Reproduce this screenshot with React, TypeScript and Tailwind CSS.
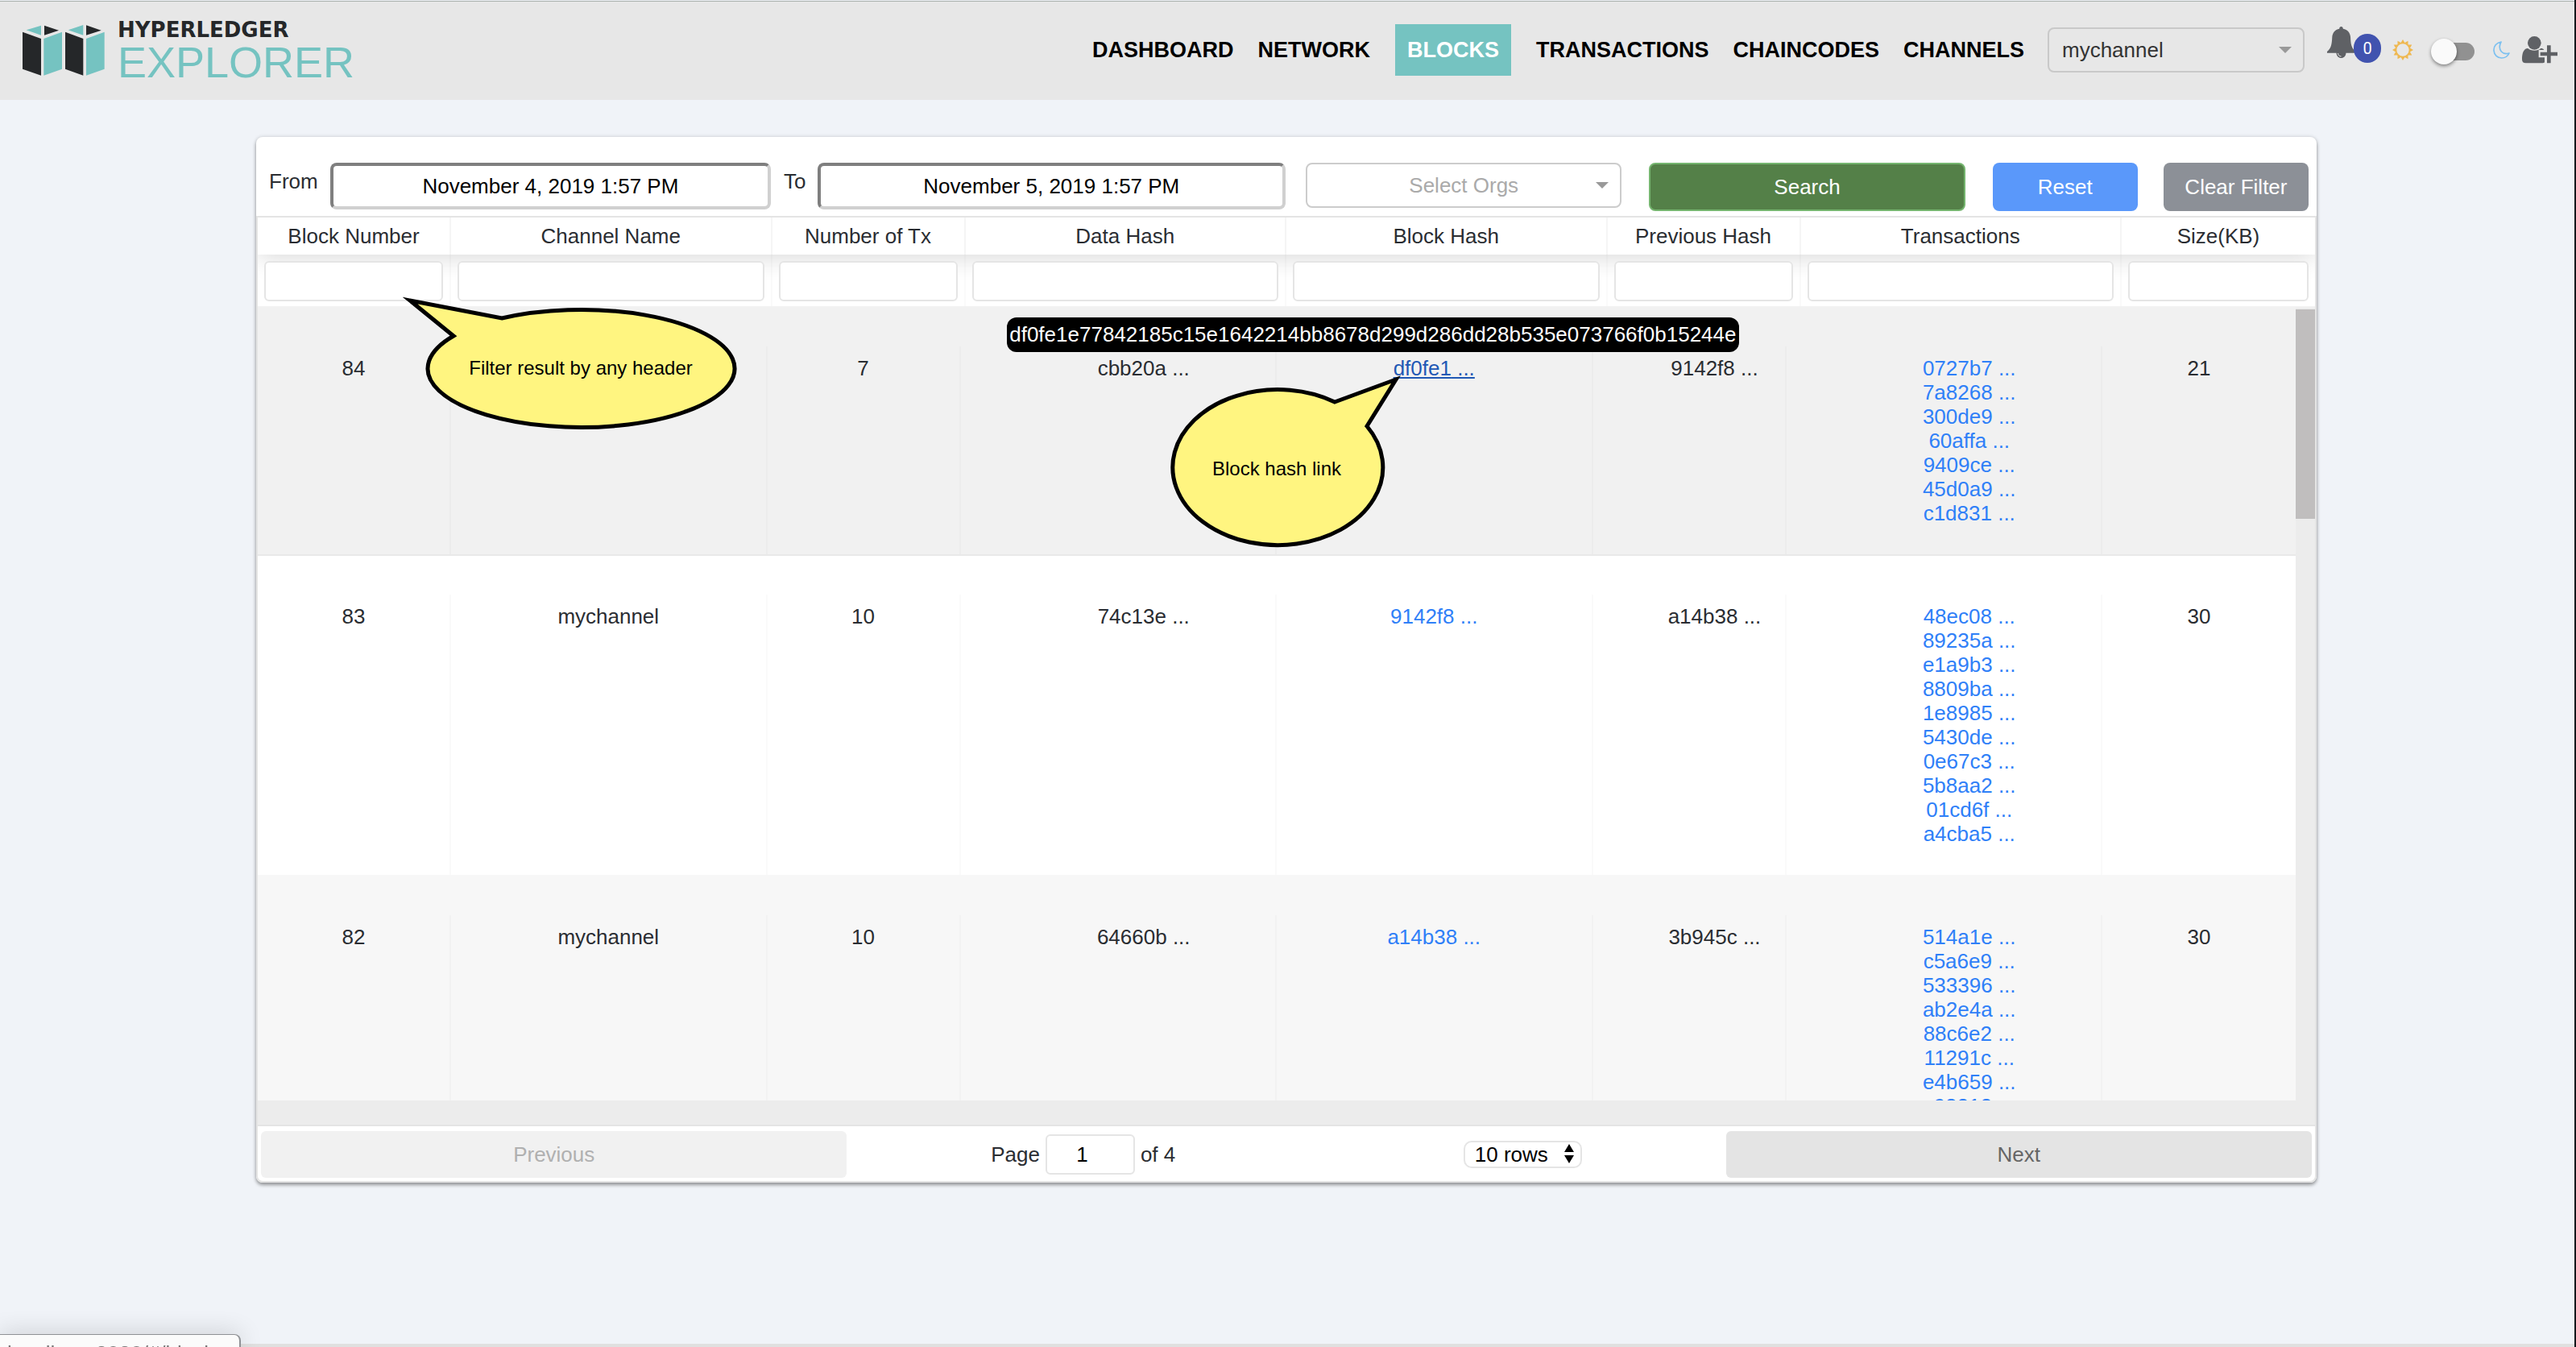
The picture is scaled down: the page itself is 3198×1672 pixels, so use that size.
import React from "react";

const navItems = ["DASHBOARD", "NETWORK", "BLOCKS", "TRANSACTIONS", "CHAINCODES", "CHANNELS"];

const columns = [
  "Block Number",
  "Channel Name",
  "Number of Tx",
  "Data Hash",
  "Block Hash",
  "Previous Hash",
  "Transactions",
  "Size(KB)",
];

const rowGrid = "grid grid-cols-[240px_1fr_240px_1fr_1fr_240px_1fr_240px]";

type Block = {
  id: number;
  channel: string;
  txCount: number;
  dataHash: string;
  blockHash: string;
  prevHash: string;
  txs: string[];
  size: number;
  bg: string;
};

const blocks: Block[] = [
  {
    id: 84,
    channel: "",
    txCount: 7,
    dataHash: "cbb20a",
    blockHash: "df0fe1",
    prevHash: "9142f8",
    txs: ["0727b7", "7a8268", "300de9", "60affa", "9409ce", "45d0a9", "c1d831"],
    size: 21,
    bg: "bg-[#f1f1f1]",
  },
  {
    id: 83,
    channel: "mychannel",
    txCount: 10,
    dataHash: "74c13e",
    blockHash: "9142f8",
    prevHash: "a14b38",
    txs: ["48ec08", "89235a", "e1a9b3", "8809ba", "1e8985", "5430de", "0e67c3", "5b8aa2", "01cd6f", "a4cba5"],
    size: 30,
    bg: "bg-white",
  },
  {
    id: 82,
    channel: "mychannel",
    txCount: 10,
    dataHash: "64660b",
    blockHash: "a14b38",
    prevHash: "3b945c",
    txs: ["514a1e", "c5a6e9", "533396", "ab2e4a", "88c6e2", "11291c", "e4b659", "c98212"],
    size: 30,
    bg: "bg-[#f7f7f7]",
  },
];

function Logo() {
  return (
    <a href="#/" className="-my-4 flex items-center">
      <svg className="h-[63px] w-[102px]" viewBox="84 97 306 189" aria-hidden="true">
        <g fill="#252729">
          <path d="M84 123L153 148V285L84 261Z" />
          <path d="M165 99L219 117L165 135Z" />
          <path d="M243 123L310 148V285L243 261Z" />
          <path d="M321 98L377 117L321 135Z" />
        </g>
        <g fill="#75c3c1">
          <path d="M163 148L231 123V261L163 285Z" />
          <path d="M98 116L153 99V135Z" />
          <path d="M321 148L389 123V261L321 285Z" />
          <path d="M254 116L310 97V135Z" />
        </g>
      </svg>
      <span className="ml-4 flex flex-col pt-1">
        <span className="font-['DejaVu_Sans'] text-[26px] font-bold leading-[26px] text-[#252729]">HYPERLEDGER</span>
        <span className="text-[54px] leading-[54px] text-[#75c3c1]">EXPLORER</span>
      </span>
    </a>
  );
}

function Caret() {
  return (
    <svg className="pointer-events-none absolute right-4 top-6 h-2 w-4" viewBox="0 0 16 8" aria-hidden="true">
      <path d="M0 0H16L8 8Z" fill="#999" />
    </svg>
  );
}

function BellIcon() {
  return (
    <svg className="h-[39px] w-[35px]" viewBox="0 0 106 118" aria-hidden="true">
      <path
        fill="#5f6165"
        d="M53 0C57 0 60 3 60 8C77 11 87 23 88 40C89 66 91 80 106 92V99H71C71 110 63 118 53 118C43 118 35 110 35 99H0V94C15 82 18 66 19 40C20 23 30 11 46 8C46 3 49 0 53 0Z"
      />
      <path d="M41 100C41 107 46 112 53 112" fill="none" stroke="#e7e7e7" strokeWidth="3" />
    </svg>
  );
}

function SunIcon() {
  const rays = Array.from({ length: 12 }, (_, i) => i * 30);
  return (
    <svg className="h-[26px] w-[26px]" viewBox="-38 -38 76 76" aria-hidden="true">
      <circle r="25" fill="none" stroke="#efb850" strokeWidth="5" />
      {rays.map((angle) => (
        <path key={angle} d="M-7 -26L0 -38L7 -26Z" fill="#efb850" transform={`rotate(${angle})`} />
      ))}
    </svg>
  );
}

function MoonIcon() {
  return (
    <svg className="h-[22px] w-[21px]" viewBox="0 0 63 66" aria-hidden="true">
      <path
        d="M30 3C12 6 2 20 3 35C4 51 16 63 32 63C45 63 55 56 60 45C49 48 38 47 31 39C23 29 24 14 30 3Z"
        fill="none"
        stroke="#7cc0f0"
        strokeWidth="5"
        strokeLinejoin="round"
      />
    </svg>
  );
}

function UserPlusIcon() {
  return (
    <svg className="h-[34px] w-[44px]" viewBox="0 0 132 102" aria-hidden="true">
      <g fill="#5f6165">
        <circle cx="46" cy="25" r="25" />
        <path d="M22 45C33 56 59 56 70 45C76 45 79 47 82 51H62V79H84V97C82 99 79 100 74 100H14C5 100 0 95 0 86C0 64 6 45 22 45Z" />
        <path d="M93 34H107V59H132V73H107V100H93V73H68V59H93Z" />
      </g>
    </svg>
  );
}

function ThemeSwitch() {
  return (
    <label className="relative flex h-8 w-[54px] items-center">
      <input type="checkbox" role="switch" aria-label="Dark theme" className="absolute inset-0 opacity-0" />
      <span className="ml-3 h-[22px] w-full rounded-full bg-[#919191]" />
      <span className="absolute left-0 top-0 h-8 w-8 rounded-full bg-[#fafafa] shadow-[0_2px_4px_rgba(0,0,0,0.45)]" />
    </label>
  );
}

function Header() {
  return (
    <header className="flex items-center justify-between border-t border-[#a9b0ad] bg-[#e7e7e7] pb-[30px] pl-7 pr-[21px] pt-7">
      <Logo />
      <div className="flex items-center">
        <nav className="flex text-[27px] font-bold text-black">
          {navItems.map((item) => (
            <a
              key={item}
              href={"#/" + item.toLowerCase()}
              className={
                item === "BLOCKS"
                  ? "mx-4 bg-[#75c3c1] px-[15px] leading-[64px] text-white"
                  : "px-[15px] leading-[64px]"
              }
            >
              {item}
            </a>
          ))}
        </nav>
        <div className="relative ml-3.5 w-[319px]">
          <select
            aria-label="Channel"
            className="h-14 w-full appearance-none rounded-lg border-2 border-[#c9c9c9] bg-transparent px-4 text-[26px] text-[#333]"
          >
            <option>mychannel</option>
          </select>
          <Caret />
        </div>
        <button type="button" aria-label="Notifications" className="relative ml-7 mr-3.5 flex h-[58px] w-[67px] items-start">
          <BellIcon />
          <span className="absolute right-0 top-[9px] flex h-9 w-[34px] items-center justify-center rounded-full bg-[#4153af] font-['Roboto'] text-[20px] text-white">
            0
          </span>
        </button>
        <div className="flex items-center">
          <SunIcon />
          <span className="ml-[22px] mr-[23px] mt-1">
            <ThemeSwitch />
          </span>
          <MoonIcon />
          <button type="button" aria-label="Add user" className="ml-[15px]">
            <UserPlusIcon />
          </button>
        </div>
      </div>
    </header>
  );
}

const dateInput =
  "h-[58px] w-0 rounded-lg border-4 border-b-[#d0d0d0] border-l-[#7f7f7f] border-r-[#d0d0d0] border-t-[#7f7f7f] bg-white text-center text-[26px] text-black";

function Toolbar() {
  return (
    <form className="flex items-start pb-1.5 pl-4 pr-2.5 pt-8" onSubmit={(e) => e.preventDefault()}>
      <label htmlFor="from" className="mr-[15px] mt-2">
        From
      </label>
      <input id="from" className={dateInput + " flex-[539]"} defaultValue="November 4, 2019 1:57 PM" />
      <label htmlFor="to" className="ml-4 mr-3.5 mt-2">
        To
      </label>
      <input id="to" className={dateInput + " flex-[573]"} defaultValue="November 5, 2019 1:57 PM" />
      <div className="relative ml-[25px] mr-[34px] flex-[392]">
        <select
          aria-label="Organizations"
          className="h-14 w-full appearance-none rounded-lg border-2 border-[#ccc] bg-white text-[#aaa] [text-align-last:center]"
        >
          <option>Select Orgs</option>
        </select>
        <Caret />
      </div>
      <button
        type="submit"
        className="h-[60px] flex-[388] rounded-lg border-2 border-[#75b56f] bg-[#548048] text-white"
      >
        Search
      </button>
      <button type="button" className="ml-[34px] h-[60px] flex-[180] rounded-lg bg-[#5a98fa] text-white">
        Reset
      </button>
      <button type="button" className="ml-8 h-[60px] flex-[180] whitespace-nowrap rounded-lg bg-[#8c9097] text-white">
        Clear Filter
      </button>
    </form>
  );
}

function FilterCallout() {
  return (
    <svg
      className="pointer-events-none absolute left-[180px] top-[51px] z-10 h-[168px] w-[420px]"
      viewBox="0 0 420 168"
    >
      <path
        d="M63 50L9 6L123 28A190.5 73 0 1 1 63 50Z"
        fill="#fff580"
        stroke="#000"
        strokeWidth="5"
        strokeMiterlimit="10"
      />
      <text x="221" y="98" textAnchor="middle" fontSize="24" fill="#000">
        Filter result by any header
      </text>
    </svg>
  );
}

function HashCallout() {
  return (
    <svg
      className="pointer-events-none absolute -left-[133px] top-8 z-10 h-[222px] w-[292px]"
      viewBox="0 0 292 222"
    >
      <path
        d="M205 37L281 9L245 67A130.5 96.5 0 1 1 205 37Z"
        fill="#fff580"
        stroke="#000"
        strokeWidth="5"
        strokeMiterlimit="10"
      />
      <text x="133" y="128" textAnchor="middle" fontSize="24" fill="#000">
        Block hash link
      </text>
    </svg>
  );
}

const cell = "border-r-2 border-black/[0.02] pb-9 pt-3 text-center";

function BlockRow({ block }: { block: Block }) {
  const hovered = block.id === 84;
  return (
    <tr className={rowGrid + " border-b-2 border-black/[0.03] pt-12 " + block.bg}>
      <td className={cell}>{block.id}</td>
      <td className={cell}>{block.channel}</td>
      <td className={cell}>{block.txCount}</td>
      <td className={cell + " pl-16"}>{block.dataHash} ...</td>
      <td className={cell + " relative"}>
        <a
          href={"#/block/" + block.blockHash}
          className={hovered ? "text-[#1f58b5] underline decoration-2 underline-offset-2" : "text-[#2f80f8]"}
        >
          {block.blockHash} ...
        </a>
        {hovered && (
          <>
            <span
              role="tooltip"
              className="absolute -right-[183px] -top-9 z-10 rounded-[12px] bg-black px-[3px] pb-[7px] pt-1.5 text-white"
            >
              df0fe1e77842185c15e1642214bb8678d299d286dd28b535e073766f0b15244e
            </span>
            <HashCallout />
          </>
        )}
      </td>
      <td className={cell + " pl-16"}>{block.prevHash} ...</td>
      <td className={cell + " pl-16"}>
        <ul>
          {block.txs.map((tx) => (
            <li key={tx}>
              <a href={"#/transaction/" + tx} className="text-[#2f80f8]">
                {tx} ...
              </a>
            </li>
          ))}
        </ul>
      </td>
      <td className="pt-3 text-center">{block.size}</td>
    </tr>
  );
}

function BlocksTable() {
  return (
    <div className="relative overflow-hidden">
      <table className="block">
        <thead className="block">
          <tr className={rowGrid + " bg-white shadow-[0_4px_30px_rgba(0,0,0,0.15)]"}>
            {columns.map((c) => (
              <th key={c} scope="col" className="border-r-2 border-black/[0.04] py-2 font-normal last:border-r-0">
                {c}
              </th>
            ))}
          </tr>
          <tr className={rowGrid + " border-b-2 border-black/5"}>
            {columns.map((c, i) => (
              <td key={c} className="relative border-r-2 border-black/[0.02] px-2 pb-1.5 pt-2 last:border-r-0">
                <input
                  aria-label={"Filter " + c}
                  className="block h-[50px] w-full rounded-md border-2 border-[#e5e5e5] bg-white px-3"
                />
                {i === 0 && <FilterCallout />}
              </td>
            ))}
          </tr>
        </thead>
        <tbody className="block h-[984px] overflow-hidden bg-[#ececec] pr-6">
          {blocks.map((b) => (
            <BlockRow key={b.id} block={b} />
          ))}
        </tbody>
      </table>
      <div className="absolute right-0 top-[114px] h-[260px] w-6 bg-[#c0bebe]" />
      <div className="h-[30px] bg-[#ececec]" />
    </div>
  );
}

function Pagination() {
  return (
    <div className="flex items-center border-t-2 border-[#e4e4e4] px-1 pb-1 pt-1.5">
      <button type="button" disabled className="h-[58px] flex-1 rounded-md bg-[#f1f1f1] text-[#b0b0b0]">
        Previous
      </button>
      <div className="flex flex-[1.5] items-center justify-around">
        <label className="flex items-center gap-[7px]">
          Page
          <input
            defaultValue="1"
            className="h-[50px] w-[111px] rounded-md border-2 border-[#e5e5e5] bg-white pr-5 text-center text-black"
          />
          of 4
        </label>
        <div className="relative">
          <select
            aria-label="Rows per page"
            className="h-[34px] w-[147px] appearance-none rounded-[10px] border-2 border-[#e5e5e5] bg-white pl-3 text-[26px] leading-[30px] text-black"
          >
            <option>10 rows</option>
          </select>
          <svg
            className="pointer-events-none absolute right-2.5 top-1 h-6 w-3"
            viewBox="0 0 12 24"
            aria-hidden="true"
          >
            <path d="M6 0L12 10H0ZM6 24L12 14H0Z" fill="#000" />
          </svg>
        </div>
      </div>
      <button type="button" className="h-[58px] flex-1 rounded-md bg-[#e4e4e4] text-[#666]">
        Next
      </button>
    </div>
  );
}

export default function App() {
  return (
    <div className="flex min-h-screen flex-col border-r-2 border-[#15171c] bg-[#f0f3f8] pt-px font-['Liberation_Sans',sans-serif] text-[26px] leading-[30px] text-[#2a2d32]">
      <Header />
      <main className="grow pl-[318px] pr-80 pt-[46px]">
        <section className="rounded-lg bg-white shadow-[0_3px_4px_rgba(0,0,0,0.35),0_0_5px_rgba(0,0,0,0.15)]">
          <Toolbar />
          <div className="rounded-b-lg border-2 border-[#e4e4e4]">
            <BlocksTable />
            <Pagination />
          </div>
        </section>
      </main>
      <footer className="h-1 bg-[#e0e0e0]" />
      <div className="fixed bottom-0 left-0 h-4 overflow-hidden rounded-tr-lg border-r-2 border-t border-[#8f9195] bg-[#fbfbfb] pl-[9px] pr-[18px] pt-2 text-[#777] shadow-[0_0_30px_rgba(0,0,0,0.2)]">
        localhost:8080/#/blocks
      </div>
    </div>
  );
}
